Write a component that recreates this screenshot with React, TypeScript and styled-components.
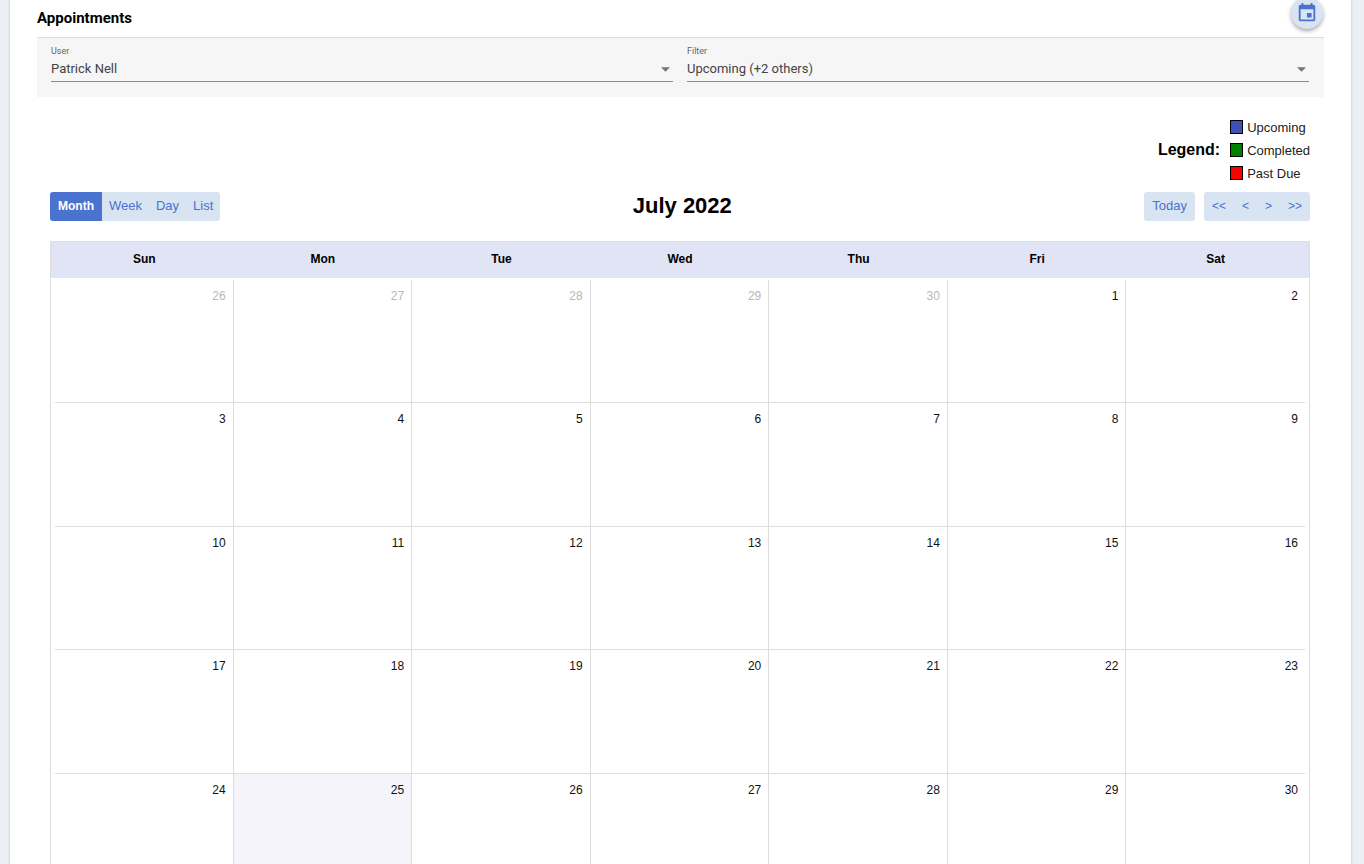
import React from "react";
import styled, { createGlobalStyle } from "styled-components";

const GlobalStyle = createGlobalStyle`
  *, *::before, *::after { box-sizing: border-box; }
  body {
    margin: 0;
    background: #ecf0f5;
    color: #000;
    font-family: "Liberation Sans", Arial, sans-serif;
  }
  button, select { font: inherit; }
`;

const Panel = styled.main`
  margin: 0 13px 0 10px;
  padding: 0 27px 24px;
  background: #fff;
  box-shadow: 0 0 3px rgba(0, 0, 0, 0.2);
  overflow: hidden;
`;

const Header = styled.header`
  display: flex;
  justify-content: space-between;
  height: 38px;
  border-bottom: 1px solid #d9dce9;
`;

const Heading = styled.h1`
  margin: 0;
  font: 700 15px/36px Roboto, sans-serif;
`;

const RoundButton = styled.button`
  display: flex;
  align-items: center;
  justify-content: center;
  width: 32px;
  height: 32px;
  margin: -3px 1px 0 0;
  padding: 0;
  border: 0;
  border-radius: 50%;
  background: #d8e4f1;
  color: #4a72cf;
  box-shadow: 0 2px 4px rgba(0, 0, 0, 0.35);
  cursor: pointer;
`;

const FilterBar = styled.form`
  display: grid;
  grid-template-columns: 1fr 1fr;
  gap: 14px;
  height: 59px;
  padding: 0 15px 15px 14px;
  background: #f6f6f6;
  font-family: Roboto, sans-serif;
`;

const Field = styled.label`
  display: flex;
  flex-direction: column;
  padding-top: 7px;
  border-bottom: 1px solid #8a8a8a;
`;

const FieldLabel = styled.span`
  font-size: 9px;
  line-height: 12px;
  color: #666;
`;

const SelectRow = styled.span`
  display: flex;
  align-items: center;
  height: 24px;
`;

const Select = styled.select`
  flex: 1;
  height: 24px;
  margin-right: -17px;
  padding: 0 17px 2px 0;
  border: 0;
  background: transparent;
  appearance: none;
  font-size: 13px;
  color: #444;
`;

const Caret = styled.svg`
  width: 9px;
  height: 5px;
  margin: 0 3px 0 5px;
  fill: #757575;
  pointer-events: none;
`;

const Calendar = styled.section`
  padding: 19px 14px 0 13px;
`;

const Legend = styled.div`
  display: flex;
  align-items: center;
  justify-content: flex-end;
  gap: 10px;
`;

const LegendTitle = styled.strong`
  padding-bottom: 2px;
  font-size: 16px;
  line-height: 20px;
`;

const LegendList = styled.ul`
  margin: 0;
  padding: 0;
  list-style: none;
`;

const LegendItem = styled.li`
  display: flex;
  align-items: center;
  gap: 4px;
  height: 23px;
  font-size: 13px;
  color: #222;
`;

const Swatch = styled.span<{ $color: string }>`
  width: 13px;
  height: 14px;
  margin-bottom: 2px;
  border: 1px solid #000;
  background: ${(p) => p.$color};
`;

const Toolbar = styled.div`
  display: flex;
  align-items: center;
  justify-content: space-between;
  margin: 7px 0 20px;
`;

const ToolGroup = styled.div`
  display: flex;
  gap: 9px;
`;

const ButtonGroup = styled.div`
  display: flex;
  height: 29px;
  border-radius: 3px;
  background: #d8e4f1;
  overflow: hidden;
`;

const ToolButton = styled.button`
  padding: 0 7px 2px;
  border: 0;
  background: transparent;
  color: #4a72cf;
  font-size: 13px;
  cursor: pointer;

  &[aria-pressed="true"] {
    padding: 0 8px 2px;
    background: #4a72cf;
    color: #fff;
    font-size: 12px;
    font-weight: 700;
  }
`;

const TodayButton = styled(ToolButton)`
  padding: 0 8px 2px;
`;

const StepButton = styled(TodayButton)`
  font-size: 12px;
`;

const Month = styled.h2`
  margin: 0;
  padding-bottom: 2px;
  font-size: 22px;
  line-height: 26px;
`;

const MonthTable = styled.table`
  display: block;
  border: 1px solid #ddd;
`;

const Head = styled.thead`
  display: block;
  padding: 0 4px 2px;
  background: #e1e4f4;
`;

const Body = styled.tbody`
  display: block;
  padding: 2px 4px 4px;
`;

const Week = styled.tr`
  display: grid;
  grid-template-columns: repeat(7, 1fr);
`;

const Weekday = styled.th`
  padding: 0;
  font-size: 12px;
  line-height: 34px;
`;

const DayRow = styled(Week)`
  height: 123px;
  border-bottom: 1px solid #ddd;

  &:nth-child(even) { height: 124px; }
  &:last-child { border-bottom: 0; }
`;

const Day = styled.td<{ $muted: boolean; $today: boolean }>`
  padding: 8px 7px;
  border-right: 1px solid #ddd;
  background: ${(p) => (p.$today ? "#f5f4fb" : "transparent")};
  color: ${(p) => (p.$muted ? "#b8b8b8" : "#111")};
  font-size: 12px;
  line-height: 16px;
  text-align: right;

  &:last-child { border-right: 0; }
`;

const weekdays = ["Sun", "Mon", "Tue", "Wed", "Thu", "Fri", "Sat"];
const legend = [
  { label: "Upcoming", color: "#3f51b5" },
  { label: "Completed", color: "#008000" },
  { label: "Past Due", color: "#ff0000" },
];

// The grid opens on Sunday, June 26 and runs for five weeks.
const weeks = Array.from({ length: 5 }, (_, w) =>
  weekdays.map((_, d) => {
    const date = new Date(2022, 5, 26 + w * 7 + d);
    const inMonth = date.getMonth() === 6;
    return { number: date.getDate(), inMonth, today: inMonth && date.getDate() === 25 };
  })
);

function SelectField({ label, value }: { label: string; value: string }) {
  return (
    <Field>
      <FieldLabel>{label}</FieldLabel>
      <SelectRow>
        <Select defaultValue={value}>
          <option>{value}</option>
        </Select>
        <Caret viewBox="0 0 10 5" aria-hidden="true">
          <path d="M0 0h10L5 5z" />
        </Caret>
      </SelectRow>
    </Field>
  );
}

export default function App() {
  return (
    <>
      <GlobalStyle />
      <Panel>
        <Header>
          <Heading>Appointments</Heading>
          <RoundButton type="button" aria-label="New appointment">
            <svg width="22" height="22" viewBox="0 0 24 24" fill="currentColor" aria-hidden="true">
              <path d="M17 12h-5v5h5v-5zM16 1v2H8V1H6v2H5c-1.11 0-1.99.9-1.99 2L3 19c0 1.1.89 2 2 2h14c1.1 0 2-.9 2-2V5c0-1.1-.9-2-2-2h-1V1h-2zm3 18H5V8h14v11z" />
            </svg>
          </RoundButton>
        </Header>
        <FilterBar>
          <SelectField label="User" value="Patrick Nell" />
          <SelectField label="Filter" value="Upcoming (+2 others)" />
        </FilterBar>
        <Calendar>
          <Legend>
            <LegendTitle>Legend:</LegendTitle>
            <LegendList>
              {legend.map((item) => (
                <LegendItem key={item.label}>
                  <Swatch $color={item.color} />
                  {item.label}
                </LegendItem>
              ))}
            </LegendList>
          </Legend>
          <Toolbar>
            <ButtonGroup>
              {["Month", "Week", "Day", "List"].map((view) => (
                <ToolButton key={view} type="button" aria-pressed={view === "Month"}>
                  {view}
                </ToolButton>
              ))}
            </ButtonGroup>
            <Month>July 2022</Month>
            <ToolGroup>
              <ButtonGroup>
                <TodayButton type="button">Today</TodayButton>
              </ButtonGroup>
              <ButtonGroup>
                {["<<", "<", ">", ">>"].map((step) => (
                  <StepButton key={step} type="button">
                    {step}
                  </StepButton>
                ))}
              </ButtonGroup>
            </ToolGroup>
          </Toolbar>
          <MonthTable>
            <Head>
              <Week>
                {weekdays.map((day) => (
                  <Weekday key={day} scope="col">{day}</Weekday>
                ))}
              </Week>
            </Head>
            <Body>
              {weeks.map((days, w) => (
                <DayRow key={w}>
                  {days.map((day, d) => (
                    <Day key={d} $muted={!day.inMonth} $today={day.today}>
                      {day.number}
                    </Day>
                  ))}
                </DayRow>
              ))}
            </Body>
          </MonthTable>
        </Calendar>
      </Panel>
    </>
  );
}
